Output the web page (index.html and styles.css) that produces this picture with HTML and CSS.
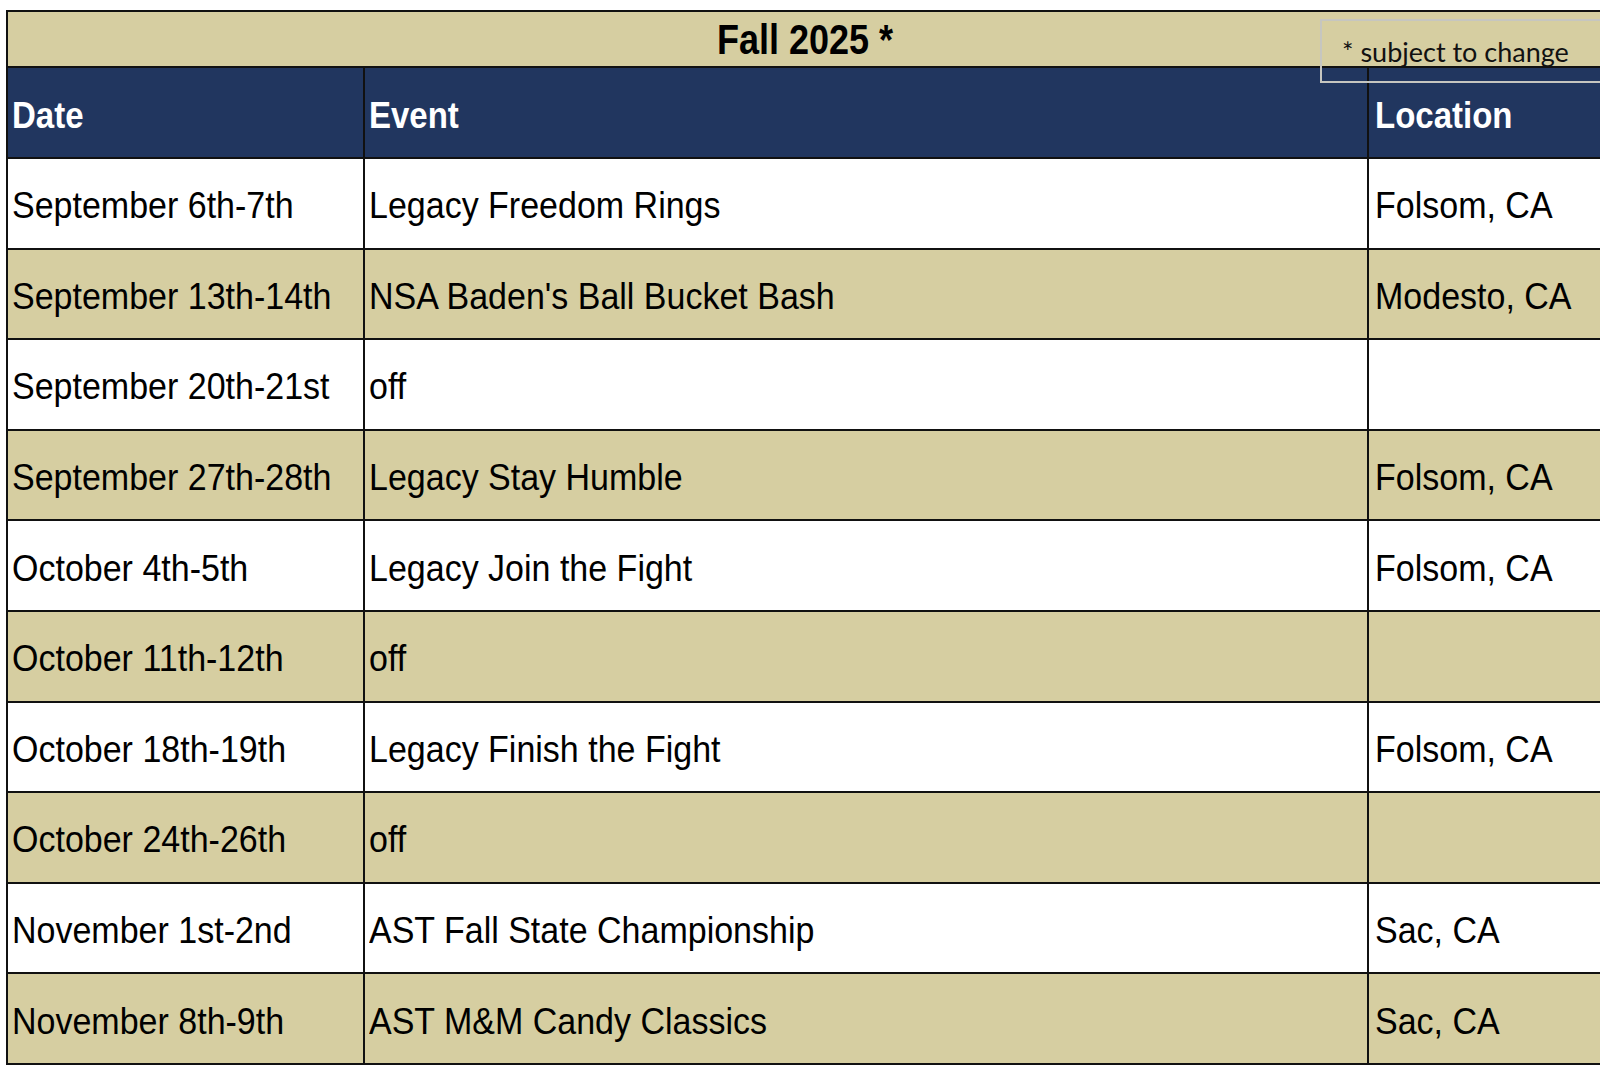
FILE: index.html
```html
<!DOCTYPE html>
<html lang="en">
<head>
<meta charset="utf-8">
<title>Fall 2025 Schedule</title>
<link rel="stylesheet" href="styles.css">
</head>
<body>
<div class="page">
  <div class="sheet">
    <div class="cell title"><span class="txt">Fall 2025 *</span></div>

    <div class="cell head"><span class="txt">Date</span></div>
    <div class="cell head ev"><span class="txt">Event</span></div>
    <div class="cell head loc"><span class="txt">Location</span></div>

    <div class="cell"><span class="txt">September 6th-7th</span></div>
    <div class="cell ev"><span class="txt">Legacy Freedom Rings</span></div>
    <div class="cell loc"><span class="txt">Folsom, CA</span></div>

    <div class="cell alt"><span class="txt">September 13th-14th</span></div>
    <div class="cell alt ev"><span class="txt">NSA Baden's Ball Bucket Bash</span></div>
    <div class="cell alt loc"><span class="txt">Modesto, CA</span></div>

    <div class="cell"><span class="txt">September 20th-21st</span></div>
    <div class="cell ev"><span class="txt">off</span></div>
    <div class="cell loc"></div>

    <div class="cell alt"><span class="txt">September 27th-28th</span></div>
    <div class="cell alt ev"><span class="txt">Legacy Stay Humble</span></div>
    <div class="cell alt loc"><span class="txt">Folsom, CA</span></div>

    <div class="cell"><span class="txt">October 4th-5th</span></div>
    <div class="cell ev"><span class="txt">Legacy Join the Fight</span></div>
    <div class="cell loc"><span class="txt">Folsom, CA</span></div>

    <div class="cell alt"><span class="txt">October 11th-12th</span></div>
    <div class="cell alt ev"><span class="txt">off</span></div>
    <div class="cell alt loc"></div>

    <div class="cell"><span class="txt">October 18th-19th</span></div>
    <div class="cell ev"><span class="txt">Legacy Finish the Fight</span></div>
    <div class="cell loc"><span class="txt">Folsom, CA</span></div>

    <div class="cell alt"><span class="txt">October 24th-26th</span></div>
    <div class="cell alt ev"><span class="txt">off</span></div>
    <div class="cell alt loc"></div>

    <div class="cell"><span class="txt">November 1st-2nd</span></div>
    <div class="cell ev"><span class="txt">AST Fall State Championship</span></div>
    <div class="cell loc"><span class="txt">Sac, CA</span></div>

    <div class="cell alt"><span class="txt">November 8th-9th</span></div>
    <div class="cell alt ev"><span class="txt">AST M&amp;M Candy Classics</span></div>
    <div class="cell alt loc"><span class="txt">Sac, CA</span></div>

    <div class="note"><span class="note-txt">* subject to change</span></div>
  </div>
</div>
</body>
</html>
```

FILE: styles.css
```css
html, body {
  margin: 0;
  padding: 0;
  background: #ffffff;
  overflow: hidden;
}

.page {
  width: 1600px;
  height: 1066px;
  overflow: hidden;
  padding: 10px 0 0 6px;
  box-sizing: border-box;
}

.sheet {
  position: relative;
  width: 1598px;
  display: grid;
  grid-template-columns: 357px 1004px 235px;
  grid-template-rows: 56px 91px repeat(10, 90.6px);
  border-left: 2px solid #111111;
  border-top: 2px solid #111111;
  font-family: "Liberation Sans", Arial, sans-serif;
  color: #000000;
}

.cell {
  display: flex;
  align-items: center;
  padding-left: 4px;
  padding-top: 5px;
  border-right: 2px solid #111111;
  border-bottom: 2px solid #111111;
  background: #ffffff;
  font-size: 34px;
  white-space: nowrap;
  overflow: hidden;
  min-width: 0;
}

.cell.ev {
  padding-left: 4px;
}

.cell.loc {
  padding-left: 6px;
}

.cell.alt {
  background: #d6cea1;
}

.txt {
  display: inline-block;
  transform: scaleY(1.1);
  transform-origin: 50% 55%;
}

.title {
  grid-column: 1 / span 3;
  justify-content: center;
  padding-left: 0;
  padding-top: 1px;
  background: #d6cea1;
  font-size: 36px;
  font-weight: bold;
}

.title .txt {
  transform: scaleY(1.16);
}

.head {
  background: #21365f;
  color: #ffffff;
  font-weight: bold;
  font-size: 33px;
  padding-top: 6px;
}

.note {
  position: absolute;
  left: 1312px;
  top: 7px;
  width: 300px;
  height: 64px;
  border: 2px solid #c6c6c0;
  box-sizing: border-box;
  display: flex;
  align-items: flex-end;
  padding: 0 0 16px 20px;
}

.note-txt {
  font-family: Lato, "Open Sans", sans-serif;
  font-size: 27px;
  color: #111111;
  line-height: 1;
  white-space: nowrap;
}
```
